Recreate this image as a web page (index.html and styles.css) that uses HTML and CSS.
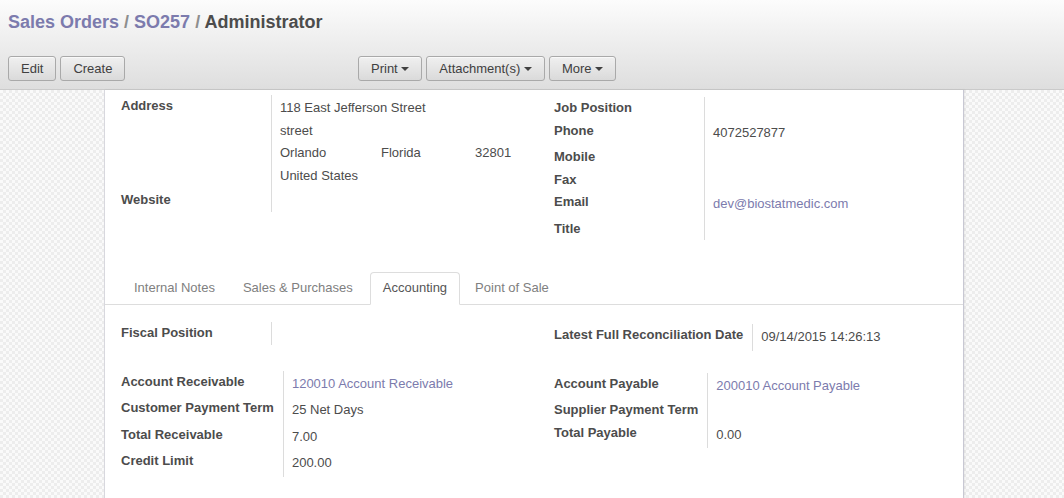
FILE: index.html
```html
<!DOCTYPE html>
<html>
<head>
<meta charset="utf-8">
<title>Administrator</title>
<link rel="stylesheet" href="styles.css">
</head>
<body>
<div class="header">
  <h2 class="title"><a class="crumb">Sales Orders</a><span class="sep"> / </span><a class="crumb">SO257</a><span class="sep"> / </span><span class="current">Administrator</span></h2>
  <div class="toolbar">
    <div class="btns-left">
      <button class="btn">Edit</button>
      <button class="btn">Create</button>
    </div>
    <div class="btns-side">
      <button class="btn">Print <span class="caret"></span></button>
      <button class="btn">Attachment(s) <span class="caret"></span></button>
      <button class="btn">More <span class="caret"></span></button>
    </div>
  </div>
</div>
<div class="canvas">
  <div class="sheet">
    <div class="outer top">
      <div class="grp">
        <div class="lbl">Address</div>
        <div class="val">
          <div class="line">118 East Jefferson Street</div>
          <div class="line">street</div>
          <div class="line"><span class="city">Orlando</span><span class="state">Florida</span><span class="zip">32801</span></div>
          <div class="line">United States</div>
        </div>
        <div class="lbl">Website</div>
        <div class="val"></div>
      </div>
      <div class="grp right">
        <div class="lbl">Job Position</div>
        <div class="val"></div>
        <div class="lbl">Phone</div>
        <div class="val"><span class="line">4072527877</span></div>
        <div class="lbl">Mobile</div>
        <div class="val"></div>
        <div class="lbl">Fax</div>
        <div class="val"></div>
        <div class="lbl">Email</div>
        <div class="val"><a class="line link">dev@biostatmedic.com</a></div>
        <div class="lbl">Title</div>
        <div class="val"></div>
      </div>
    </div>

    <div class="tabs">
      <div class="tab">Internal Notes</div>
      <div class="tab wide">Sales &amp; Purchases</div>
      <div class="tab active">Accounting</div>
      <div class="tab">Point of Sale</div>
    </div>

    <div class="pane">
      <div class="outer">
        <div class="grp">
          <div class="lbl">Fiscal Position</div>
          <div class="val"></div>
        </div>
        <div class="grp right">
          <div class="lbl">Latest Full Reconciliation Date</div>
          <div class="val"><span class="line">09/14/2015 14:26:13</span></div>
        </div>
      </div>
      <div class="outer second">
        <div class="grp">
          <div class="lbl">Account Receivable</div>
          <div class="val"><a class="line link">120010 Account Receivable</a></div>
          <div class="lbl">Customer Payment Term</div>
          <div class="val"><span class="line">25 Net Days</span></div>
          <div class="lbl">Total Receivable</div>
          <div class="val"><span class="line">7.00</span></div>
          <div class="lbl">Credit Limit</div>
          <div class="val"><span class="line">200.00</span></div>
        </div>
        <div class="grp right">
          <div class="lbl">Account Payable</div>
          <div class="val"><a class="line link">200010 Account Payable</a></div>
          <div class="lbl">Supplier Payment Term</div>
          <div class="val"></div>
          <div class="lbl">Total Payable</div>
          <div class="val"><span class="line">0.00</span></div>
        </div>
      </div>
    </div>
  </div>
</div>
</body>
</html>
```
FILE: styles.css
```css
* {
  box-sizing: border-box;
}

html,
body {
  margin: 0;
  padding: 0;
}

body {
  font-family: "Liberation Sans", Arial, sans-serif;
  font-size: 13px;
  color: #4c4c4c;
  background-color: #f5f5f5;
  overflow: hidden;
}

.header {
  height: 90px;
  padding: 12px 8px 0;
  background: linear-gradient(#fcfcfc, #dedede);
  border-bottom: 1px solid #cacaca;
}

.title {
  margin: 0;
  font-size: 18px;
  line-height: 21px;
  font-weight: bold;
  color: #4c4c4c;
  white-space: nowrap;
}

.crumb {
  color: #7c7bad;
  text-decoration: none;
}

.sep {
  color: #8e8e8e;
}

.toolbar {
  display: flex;
  margin-top: 23px;
}

.btns-left {
  display: flex;
  gap: 4px;
  width: 350px;
}

.btns-side {
  display: flex;
  gap: 4px;
}

.btn {
  font-family: "Liberation Sans", Arial, sans-serif;
  font-size: 13px;
  line-height: 17px;
  height: 25px;
  padding: 3px 12px;
  color: #404040;
  background: linear-gradient(#f0f0f0, #dadada);
  border: 1px solid #a9a9a9;
  border-radius: 3px;
  box-shadow: 0 1px 0 rgba(255, 255, 255, 0.6) inset;
  white-space: nowrap;
}

.caret {
  display: inline-block;
  width: 0;
  height: 0;
  vertical-align: middle;
  border-top: 4px solid #404040;
  border-left: 4px solid transparent;
  border-right: 4px solid transparent;
  margin-top: -2px;
}

.canvas {
  height: 408px;
  padding-left: 104px;
  background-color: #f6f6f6;
  background-image: repeating-conic-gradient(#ededed 0 25%, #fafafa 0 50%);
  background-size: 6px 6px;
}

.sheet {
  width: 860px;
  min-height: 430px;
  background: #fff;
  border-left: 1px solid #d8d8de;
  border-right: 1px solid #c8c8d3;
  box-shadow: 1px 0 2px rgba(0, 0, 0, 0.08);
  padding: 5px 0 40px;
}

.outer {
  display: grid;
  grid-template-columns: 433px 1fr;
  padding: 0 16px;
  align-items: start;
}

.grp {
  display: grid;
  grid-template-columns: minmax(150px, max-content) 1fr;
}

.grp.right {
  padding-top: 2px;
}

.lbl {
  font-weight: bold;
  line-height: 18.57px;
  padding: 2px 9px 2px 0;
  white-space: nowrap;
}

.val {
  border-left: 1px solid #dcdcdc;
  padding: 2px 0 2px 8px;
  line-height: 18.57px;
}

.line {
  display: block;
  padding: 2px 0;
  white-space: nowrap;
}

.link {
  color: #7c7bad;
  text-decoration: none;
}

.city {
  display: inline-block;
  width: 101px;
}

.state {
  display: inline-block;
  width: 94px;
}

.tabs {
  display: flex;
  margin-top: 32px;
  padding-left: 16px;
  border-bottom: 1px solid #dddddd;
}

.tab {
  margin-right: 2px;
  margin-bottom: -1px;
  padding: 6px 12px;
  line-height: 18.57px;
  border: 1px solid transparent;
  border-radius: 4px 4px 0 0;
  color: #808080;
  white-space: nowrap;
}

.tab.wide {
  padding-right: 14px;
}

.tab.active {
  color: #555555;
  background: #fff;
  border-color: #dddddd #dddddd #fff;
}

.pane {
  padding-top: 17px;
}

.outer.second {
  margin-top: 20px;
}
```
